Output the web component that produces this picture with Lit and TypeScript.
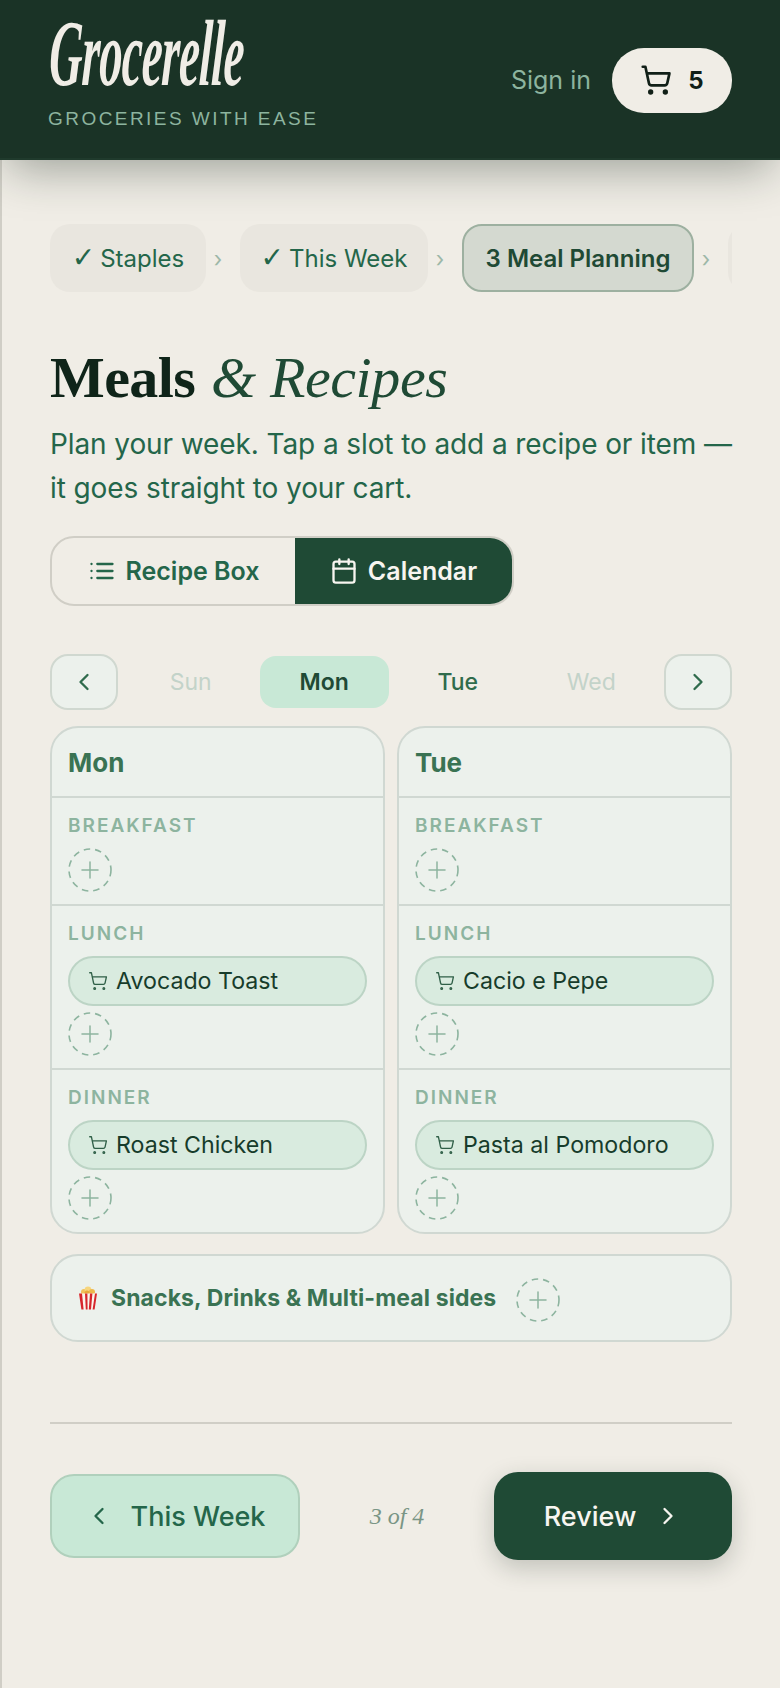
import { LitElement, html, css } from "lit";
import { customElement } from "lit/decorators.js";

const cart = (size: number, sw: number) => html`<svg width=${size} height=${size} viewBox="0 0 24 24" fill="none" stroke="currentColor" stroke-width=${sw} stroke-linecap="round" stroke-linejoin="round"><circle cx="8" cy="21" r="1"/><circle cx="19" cy="21" r="1"/><path d="M2.05 2.05h2l2.66 12.42a2 2 0 0 0 2 1.58h9.78a2 2 0 0 0 1.95-1.57l1.65-7.43H5.12"/></svg>`;
const chev = (d: "l" | "r", size = 28) => html`<svg width=${size} height=${size} viewBox="0 0 24 24" fill="none" stroke="currentColor" stroke-width="2" stroke-linecap="round" stroke-linejoin="round"><path d=${d === "l" ? "m15 18-6-6 6-6" : "m9 18 6-6-6-6"}/></svg>`;
const add = html`<button class="add"><svg width="44" height="44" viewBox="0 0 44 44" fill="none" stroke="currentColor" stroke-linecap="round"><circle cx="22" cy="22" r="21" stroke-width="1.6" stroke-dasharray="6.5 5" stroke-linecap="butt"/><path d="M22 14v16M14 22h16" stroke-width="1.5"/></svg></button>`;
const popcorn = html`<svg class="pop" width="20" height="24" viewBox="0 0 20 24">
  <circle cx="6" cy="6" r="3" fill="#f2c25c"/><circle cx="10" cy="4" r="3.4" fill="#f7d67e"/><circle cx="14" cy="6" r="3" fill="#eeb84c"/><circle cx="9" cy="7" r="2.6" fill="#e8a93c"/>
  <path d="M1 7.5h18l-2.4 16H3.4z" fill="#fbf5ee"/>
  <path d="M1 7.5h3l1.6 16H3.4zM7 7.5h2.4l.2 16H7.8zM12 7.5h2.4l-1.4 16h-2.2zM17 7.5h2l-2.4 16h-2z" fill="#d6262c"/>
</svg>`;

interface Slot { name: string; item?: string }
const days: { name: string; slots: Slot[] }[] = [
  { name: "Mon", slots: [{ name: "Breakfast" }, { name: "Lunch", item: "Avocado Toast" }, { name: "Dinner", item: "Roast Chicken" }] },
  { name: "Tue", slots: [{ name: "Breakfast" }, { name: "Lunch", item: "Cacio e Pepe" }, { name: "Dinner", item: "Pasta al Pomodoro" }] },
];

@customElement("app-root")
export class AppRoot extends LitElement {
  static styles = css`
    :host { display: block; width: 780px; min-height: 1688px; background: #f0ede6; font-family: Inter, "Noto Sans", sans-serif; color: #1f4a35; overflow: hidden; }
    * { box-sizing: border-box; }
    button { font: inherit; color: inherit; background: none; border: none; padding: 0; margin: 0; }
    svg { display: block; flex: none; }
    header { position: relative; z-index: 2; height: 160px; background: #1a3326; border-bottom: 2px solid #1f3a2c; box-shadow: 0 16px 44px -8px rgba(26, 40, 30, 0.4); display: flex; justify-content: space-between; padding: 0 48px; }
    .brand { display: flex; flex-direction: column; }
    .logo { font-family: "Liberation Serif", serif; font-style: italic; font-weight: 700; font-size: 94px; line-height: 74px; height: 74px; margin-top: 16px; color: #f0ede6; letter-spacing: -1px; transform: scaleX(0.49) skewX(-5deg); transform-origin: left bottom; white-space: nowrap; }
    .tag { font-size: 19px; line-height: 24px; letter-spacing: 2.45px; color: #8db49f; margin-top: 17px; font-weight: 400; font-family: "Liberation Sans", sans-serif; white-space: nowrap; }
    .actions { display: flex; align-items: center; gap: 21px; height: 160px; }
    .signin { font-size: 25px; color: #8db49f; }
    .cartbtn { width: 120px; height: 65px; border-radius: 32px; background: #f0ede6; color: #111f17; display: flex; align-items: center; justify-content: center; gap: 16px; font-size: 24px; font-weight: 700; }
    main { border-left: 2px solid #d0cec6; padding: 64px 48px 0; min-height: 1528px; }
    .stepper { display: flex; align-items: center; overflow: hidden; height: 68px; white-space: nowrap; }
    .step { flex: none; height: 68px; border-radius: 20px; background: #e9e6df; color: #24664a; font-size: 24px; display: flex; align-items: center; justify-content: center; }
    .step.st { width: 156px; }
    .step.tw { width: 188px; }
    .step.blank { width: 60px; }
    .step i { font-style: normal; font-size: 28px; line-height: 24px; margin-right: 5px; font-family: "Liberation Sans", "DejaVu Sans", sans-serif; }
    .step.cur { width: 232px; background: #d4d9d0; border: 2px solid #9db0a0; color: #1f4a35; font-weight: 600; }
    .sep { flex: none; width: 34px; padding: 2px 10px 0 0; text-align: center; color: #9db8a8; font-size: 22px; }
    h1 { margin: 52px 0 0; font-family: "Liberation Serif", serif; font-size: 58px; line-height: 68px; font-weight: 700; color: #0f2419; letter-spacing: -0.6px; }
    h1 em { font-weight: 400; color: #1f4a35; letter-spacing: -0.4px; margin-left: 2px; }
    .sub { margin: 10px 0 0; font-size: 28px; line-height: 44px; letter-spacing: -0.1px; color: #24664a; white-space: nowrap; }
    .toggle { margin-top: 26px; width: 464px; height: 70px; border: 2px solid #d0cec6; border-radius: 24px; display: flex; overflow: hidden; font-size: 25px; font-weight: 600; }
    .toggle button { display: flex; align-items: center; justify-content: center; gap: 10px; height: 100%; }
    .toggle .a { width: 243px; color: #24664a; }
    .toggle .b { flex: 1; background: #1f4a35; color: #f7f5f0; }
    .daynav { margin-top: 48px; display: flex; gap: 8px; height: 56px; }
    .nb { flex: none; width: 68px; height: 56px; border: 2px solid #d0d8d0; border-radius: 18px; background: #ecf1ec; color: #2f6b4c; display: flex; align-items: center; justify-content: center; }
    .dl { flex: 1; display: grid; grid-template-columns: repeat(4, 1fr); gap: 4px; padding: 2px 0; }
    .dl div { display: flex; align-items: center; justify-content: center; font-size: 23px; border-radius: 16px; color: #2f6b4c; font-weight: 500; }
    .dl .off { color: #c3d3c9; font-weight: 400; }
    .dl .on { background: #c8e8d6; color: #1f4a35; font-weight: 600; }
    .cards { margin-top: 16px; display: grid; grid-template-columns: 1fr 1fr; gap: 12px; }
    .card { border: 2px solid #d0d8d2; border-radius: 28px; background: #ecf1ec; overflow: hidden; }
    .cardh { height: 68px; padding: 0 16px; display: flex; align-items: center; font-size: 26px; font-weight: 700; color: #3a7353; }
    .slot { border-top: 2px solid #d0d8d2; padding: 16px 16px 12px; display: flex; flex-direction: column; gap: 6px; }
    .lab { font-size: 19px; line-height: 24px; height: 24px; letter-spacing: 2px; color: #8db49f; font-weight: 600; text-transform: uppercase; margin-bottom: 4px; }
    .add { width: 44px; height: 44px; flex: none; color: #8db49f; display: block; }
    .pill { height: 50px; border: 2px solid #bcd4c5; background: #d9ebdf; border-radius: 25px; display: flex; align-items: center; gap: 8px; padding: 0 18px; font-size: 23.2px; font-weight: 400; color: #173c2b; white-space: nowrap; }
    .pill svg { color: #2f5f47; }
    .snack { margin-top: 20px; height: 88px; border: 2px solid #d0d8d2; border-radius: 28px; background: #ecf1ec; display: flex; align-items: center; padding: 0 26px; font-size: 23px; letter-spacing: 0.1px; font-weight: 700; color: #3a7353; white-space: nowrap; }
    .snack .pop { margin-right: 13px; }
    .snack .add { margin-left: 20px; margin-top: 4px; }
    .rule { margin-top: 80px; height: 2px; background: #d0cec6; }
    .foot { margin-top: 48px; display: flex; align-items: center; justify-content: space-between; }
    .back { width: 250px; height: 84px; border: 2px solid #b0d0bc; border-radius: 24px; background: #c8e8d6; color: #24664a; font-size: 27px; font-weight: 500; display: flex; align-items: center; justify-content: center; gap: 18px; }
    .of { font-family: "Liberation Serif", serif; font-style: italic; font-size: 24px; color: #7a9585; }
    .next { width: 238px; height: 88px; border-radius: 24px; background: #1f4a35; color: #f7f5f0; font-size: 27px; font-weight: 500; display: flex; align-items: center; justify-content: center; gap: 18px; box-shadow: 0 8px 24px rgba(26, 40, 30, 0.22); }
  `;

  render() {
    return html`
      <header>
        <div class="brand">
          <div class="logo">Grocerelle</div>
          <div class="tag">GROCERIES WITH EASE</div>
        </div>
        <div class="actions">
          <span class="signin">Sign in</span>
          <button class="cartbtn">${cart(32, 2)}<span>5</span></button>
        </div>
      </header>
      <main>
        <nav class="stepper">
          <div class="step st"><i>✓</i> Staples</div><span class="sep">›</span>
          <div class="step tw"><i>✓</i> This Week</div><span class="sep">›</span>
          <div class="step cur">3 Meal Planning</div><span class="sep">›</span>
          <div class="step blank"></div>
        </nav>
        <h1>Meals <em>&amp; Recipes</em></h1>
        <p class="sub">Plan your week. Tap a slot to add a recipe or item —<br />it goes straight to your cart.</p>
        <div class="toggle">
          <button class="a"><svg width="28" height="28" viewBox="0 0 24 24" fill="none" stroke="currentColor" stroke-width="2" stroke-linecap="round"><path d="M8 6h13M8 12h13M8 18h13M3 6h.01M3 12h.01M3 18h.01"/></svg>Recipe Box</button>
          <button class="b"><svg width="28" height="28" viewBox="0 0 24 24" fill="none" stroke="currentColor" stroke-width="2" stroke-linecap="round" stroke-linejoin="round"><rect x="3" y="4" width="18" height="18" rx="2"/><path d="M16 2v4M8 2v4M3 10h18"/></svg>Calendar</button>
        </div>
        <div class="daynav">
          <button class="nb">${chev("l")}</button>
          <div class="dl"><div class="off">Sun</div><div class="on">Mon</div><div>Tue</div><div class="off">Wed</div></div>
          <button class="nb">${chev("r")}</button>
        </div>
        <div class="cards">
          ${days.map((d) => html`<section class="card">
            <div class="cardh">${d.name}</div>
            ${d.slots.map((s) => html`<div class="slot">
              <div class="lab">${s.name}</div>
              ${s.item ? html`<div class="pill">${cart(20, 1.6)}<span>${s.item}</span></div>` : ""}
              ${add}
            </div>`)}
          </section>`)}
        </div>
        <div class="snack">${popcorn}<span>Snacks, Drinks &amp; Multi-meal sides</span>${add}</div>
        <div class="rule"></div>
        <div class="foot">
          <button class="back">${chev("l")}<span>This Week</span></button>
          <span class="of">3 of 4</span>
          <button class="next"><span>Review</span>${chev("r")}</button>
        </div>
      </main>
    `;
  }
}
